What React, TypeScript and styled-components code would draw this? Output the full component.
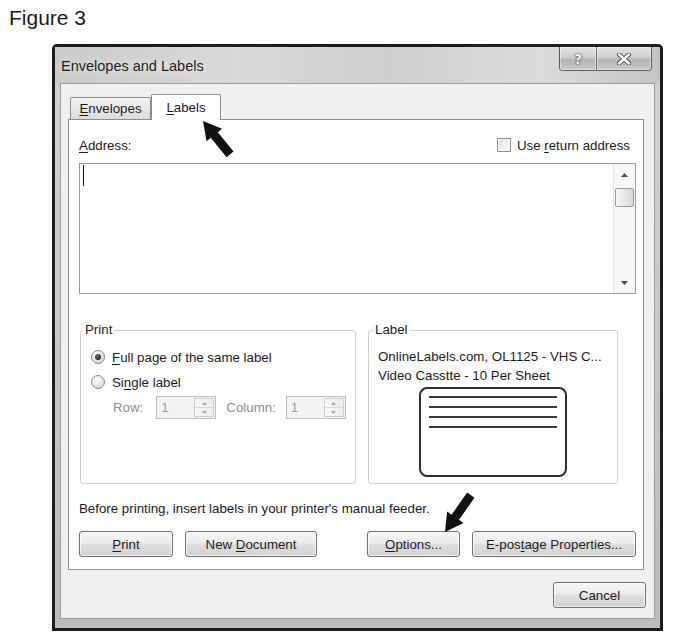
import React from "react";
import styled, { createGlobalStyle } from "styled-components";

const Global = createGlobalStyle`
  html, body {
    margin: 0;
    padding: 0;
    background: #fff;
  }
  body {
    font-family: "Liberation Sans", Arial, sans-serif;
    color: #1b1b1b;
  }
`;

const Page = styled.div`
  position: relative;
  width: 679px;
  height: 638px;
  overflow: hidden;
  background: #fff;
`;

const Caption = styled.div`
  padding: 6px 0 0 9px;
  height: 24px;
  font-size: 21px;
  line-height: 24px;
  color: #1a1a1a;
`;

const Window = styled.div`
  box-sizing: border-box;
  width: 611px;
  height: 587px;
  margin: 14px 0 0 52px;
  border: 3px solid #1d1d1d;
  border-radius: 5px 5px 0 0;
  padding: 0 5px 9px 5px;
  display: flex;
  flex-direction: column;
  background: linear-gradient(180deg, #c6c6c6 0%, #d2d2d2 8%, #c8c8c8 50%, #bcbcbc 100%);
`;

const TitleBar = styled.div`
  height: 36px;
  display: flex;
  justify-content: space-between;
  align-items: flex-start;
  margin: 0 -5px;
  padding: 0 8px 0 6px;
  background: linear-gradient(90deg, #cbcbcb 0%, #d9d9d9 30%, #cfcfcf 55%, #dcdcdc 80%, #c4c4c4 100%);
`;

const Title = styled.div`
  padding-top: 11px;
  font-size: 14.5px;
  line-height: 17px;
  color: #1c1c1c;
  text-shadow: 0 0 6px rgba(255, 255, 255, 0.9);
`;

const CaptionButtons = styled.div`
  display: flex;
  height: 23px;
  border: 1px solid #5c5c5c;
  border-top: none;
  border-radius: 0 0 4px 4px;
  overflow: hidden;
`;

const CapButton = styled.div<{ $w: number }>`
  box-sizing: border-box;
  width: ${(p) => p.$w}px;
  display: flex;
  align-items: center;
  justify-content: center;
  background: linear-gradient(180deg, #e2e2e2 0%, #cfcfcf 45%, #b4b4b4 55%, #c9c9c9 100%);
  box-shadow: inset 0 0 0 1px rgba(255, 255, 255, 0.45);
  & + & {
    border-left: 1px solid #6a6a6a;
  }
`;

const HelpGlyph = styled.span`
  font-family: "DejaVu Sans", sans-serif;
  font-weight: bold;
  font-size: 14px;
  color: #f4f4f4;
  text-shadow: 0 0 1px #444, 0 0 1px #444, 0 0 2px #555;
`;

const Client = styled.div`
  flex: 1;
  box-sizing: border-box;
  background: #f0f0f0;
  border: 1px solid #9c9c9c;
  padding: 10px 8px 10px 7px;
  display: flex;
  flex-direction: column;
`;

const TabStrip = styled.div`
  display: flex;
  align-items: flex-end;
  height: 26px;
  margin-bottom: -1px;
  padding-left: 2px;
`;

const Tab = styled.div<{ $active?: boolean; $w: number }>`
  box-sizing: border-box;
  position: relative;
  z-index: ${(p) => (p.$active ? 2 : 1)};
  width: ${(p) => p.$w}px;
  height: ${(p) => (p.$active ? 26 : 22)}px;
  margin-bottom: ${(p) => (p.$active ? 0 : 1)}px;
  border: 1px solid #8c8c8c;
  border-bottom: none;
  border-radius: 2px 2px 0 0;
  background: ${(p) =>
    p.$active ? "#ffffff" : "linear-gradient(180deg, #f4f4f4 0%, #e7e7e7 50%, #dcdcdc 100%)"};
  display: flex;
  align-items: flex-end;
  justify-content: center;
  padding-bottom: ${(p) => (p.$active ? 5 : 3)}px;
  font-size: 13.3px;
  line-height: 15px;
`;

const Panel = styled.div`
  box-sizing: border-box;
  height: 451px;
  margin-right: 2px;
  border: 1px solid #8d8d8d;
  background: #fff;
  padding: 17px 7px 12px 10px;
  display: flex;
  flex-direction: column;
`;

const AddressRow = styled.div`
  height: 16px;
  display: flex;
  align-items: center;
  justify-content: space-between;
  padding-right: 6px;
  font-size: 13.3px;
`;

const CheckWrap = styled.div`
  display: flex;
  align-items: center;
  gap: 6px;
`;

const CheckBox = styled.span`
  box-sizing: border-box;
  width: 14px;
  height: 14px;
  border: 1px solid #8f8f8f;
  background: linear-gradient(135deg, #dcdcdc 0%, #f2f2f2 60%, #fdfdfd 100%);
  box-shadow: inset 0 0 0 1px #f7f7f7;
`;

const U = styled.span`
  text-decoration: underline;
  text-underline-offset: 2px;
  text-decoration-thickness: 1px;
`;

const AddressBox = styled.div`
  box-sizing: border-box;
  height: 131px;
  margin-top: 10px;
  border: 1px solid #9a9a9a;
  display: flex;
`;

const TextArea = styled.div`
  flex: 1;
  padding: 1px 3px;
`;

const Caret = styled.div`
  width: 1px;
  height: 21px;
  background: #111;
`;

const ScrollBar = styled.div`
  width: 21px;
  display: flex;
  flex-direction: column;
  align-items: center;
  background: #f7f7f7;
  border-left: 1px solid #e4e4e4;
`;

const ScrollArrow = styled.div`
  height: 21px;
  width: 100%;
  display: flex;
  align-items: center;
  justify-content: center;
`;

const Thumb = styled.div`
  box-sizing: border-box;
  width: 19px;
  height: 19px;
  margin-top: 3px;
  border: 1px solid #9b9b9b;
  border-radius: 2px;
  background: linear-gradient(90deg, #f6f6f6 0%, #e9e9e9 50%, #d6d6d6 100%);
`;

const Spacer = styled.div`
  flex: 1;
`;

const Groups = styled.div`
  display: flex;
  gap: 12px;
  margin: 28px 0 0 1px;
`;

const Group = styled.fieldset<{ $w: number }>`
  box-sizing: border-box;
  width: ${(p) => p.$w}px;
  height: 162px;
  margin: 0;
  padding: 0;
  border: 1px solid #d2d2d2;
  border-radius: 3px;
  min-inline-size: 0;
`;

const Legend = styled.legend<{ $x: number }>`
  margin-left: ${(p) => p.$x}px;
  padding: 0 2px;
  font-size: 13.3px;
  line-height: 16px;
`;

const PrintBody = styled.div`
  padding: 10px 0 0 10px;
  display: flex;
  flex-direction: column;
  font-size: 13.3px;
`;

const RadioRow = styled.div`
  height: 18px;
  display: flex;
  align-items: center;
  gap: 7px;
  & + & {
    margin-top: 7px;
  }
`;

const Radio = styled.span<{ $checked?: boolean }>`
  box-sizing: border-box;
  width: 14px;
  height: 14px;
  border-radius: 50%;
  border: 1px solid #8a8a8a;
  background: radial-gradient(circle at 40% 35%, #fdfdfd 0%, #e4e4e4 55%, #c4c4c4 100%);
  display: flex;
  align-items: center;
  justify-content: center;
  &::after {
    content: "";
    display: ${(p) => (p.$checked ? "block" : "none")};
    width: 6px;
    height: 6px;
    border-radius: 50%;
    background: radial-gradient(circle at 40% 35%, #666 0%, #1e1e1e 80%);
  }
`;

const SpinRow = styled.div`
  height: 23px;
  margin-top: 5px;
  padding-left: 22px;
  display: flex;
  align-items: center;
  color: #8e8e8e;
`;

const DimLabel = styled.span<{ $gap: number }>`
  margin-left: ${(p) => p.$gap}px;
`;

const Spin = styled.div<{ $gap: number }>`
  box-sizing: border-box;
  width: 60px;
  height: 23px;
  margin-left: ${(p) => p.$gap}px;
  border: 1px solid #bdbdbd;
  background: #f3f3f3;
  display: flex;
  align-items: stretch;
`;

const SpinValue = styled.span`
  flex: 1;
  padding-left: 4px;
  line-height: 21px;
  color: #9a9a9a;
`;

const SpinButtons = styled.div`
  box-sizing: border-box;
  width: 20px;
  margin: 1px;
  border: 1px solid #cfcfcf;
  display: flex;
  flex-direction: column;
  background: linear-gradient(90deg, #f7f7f7, #ececec);
`;

const SpinHalf = styled.div`
  flex: 1;
  display: flex;
  align-items: center;
  justify-content: center;
  & + & {
    border-top: 1px solid #d8d8d8;
  }
`;

const LabelBody = styled.div`
  padding: 9px 9px 0 9px;
  display: flex;
  flex-direction: column;
  font-size: 13.3px;
  line-height: 19px;
  white-space: nowrap;
`;

const Preview = styled.div`
  box-sizing: border-box;
  width: 148px;
  height: 90px;
  margin: 2px auto 0;
  border: 2px solid #2e2e2e;
  border-radius: 8px;
  padding: 7px 8px 0;
  display: flex;
  flex-direction: column;
  gap: 8px;
`;

const PreviewLine = styled.div`
  height: 2px;
  background: #3a3a3a;
`;

const Note = styled.div`
  margin-top: 16px;
  font-size: 13.3px;
  line-height: 18px;
`;

const ButtonRow = styled.div`
  margin-top: 13px;
  display: flex;
  justify-content: space-between;
`;

const ButtonGroup = styled.div`
  display: flex;
  gap: 12px;
`;

const Button = styled.button<{ $w: number }>`
  box-sizing: border-box;
  width: ${(p) => p.$w}px;
  height: 26px;
  padding: 0;
  border: 1px solid #707070;
  border-radius: 3px;
  background: linear-gradient(180deg, #f5f5f5 0%, #ececec 45%, #dfdfdf 52%, #d1d1d1 100%);
  box-shadow: inset 0 0 0 1px rgba(255, 255, 255, 0.75);
  font-family: inherit;
  font-size: 13.3px;
  color: #1b1b1b;
  display: flex;
  align-items: center;
  justify-content: center;
`;

const Footer = styled.div`
  margin-top: 12px;
  display: flex;
  justify-content: flex-end;
`;

const Overlay = styled.svg`
  position: absolute;
  left: 0;
  top: 0;
  pointer-events: none;
`;

const Tri = ({ down }: { down?: boolean }) => (
  <svg width="7" height="4" viewBox="0 0 7 4">
    <polygon points={down ? "0,0 7,0 3.5,4" : "3.5,0 7,4 0,4"} fill="#4a4a4a" />
  </svg>
);

const SmallTri = ({ down }: { down?: boolean }) => (
  <svg width="5" height="3" viewBox="0 0 5 3">
    <polygon points={down ? "0,0 5,0 2.5,3" : "2.5,0 5,3 0,3"} fill="#a8a8a8" />
  </svg>
);

const arrowPoints = (len: number) =>
  `0,0 10,18 4.5,18 4.5,${len} -4.5,${len} -4.5,18 -10,18`;

function SpinBox({ gap }: { gap: number }) {
  return (
    <Spin $gap={gap}>
      <SpinValue>1</SpinValue>
      <SpinButtons>
        <SpinHalf>
          <SmallTri />
        </SpinHalf>
        <SpinHalf>
          <SmallTri down />
        </SpinHalf>
      </SpinButtons>
    </Spin>
  );
}

export default function App() {
  return (
    <Page>
      <Global />
      <Caption>Figure 3</Caption>
      <Window>
        <TitleBar>
          <Title>Envelopes and Labels</Title>
          <CaptionButtons>
            <CapButton $w={36}>
              <HelpGlyph>?</HelpGlyph>
            </CapButton>
            <CapButton $w={55}>
              <svg width="14" height="12" viewBox="0 0 14 12">
                <path d="M2 1.5 L12 10.5 M12 1.5 L2 10.5" stroke="#555" strokeWidth="4.5" strokeLinecap="round" />
                <path d="M2 1.5 L12 10.5 M12 1.5 L2 10.5" stroke="#f5f5f5" strokeWidth="2.5" strokeLinecap="round" />
              </svg>
            </CapButton>
          </CaptionButtons>
        </TitleBar>
        <Client>
          <TabStrip>
            <Tab $w={81}>
              <span>
                <U>E</U>nvelopes
              </span>
            </Tab>
            <Tab $w={70} $active>
              <span>
                <U>L</U>abels
              </span>
            </Tab>
          </TabStrip>
          <Panel>
            <AddressRow>
              <span>
                <U>A</U>ddress:
              </span>
              <CheckWrap>
                <CheckBox />
                <span>
                  Use <U>r</U>eturn address
                </span>
              </CheckWrap>
            </AddressRow>
            <AddressBox>
              <TextArea>
                <Caret />
              </TextArea>
              <ScrollBar>
                <ScrollArrow>
                  <Tri />
                </ScrollArrow>
                <Thumb />
                <Spacer />
                <ScrollArrow>
                  <Tri down />
                </ScrollArrow>
              </ScrollBar>
            </AddressBox>
            <Groups>
              <Group $w={276}>
                <Legend $x={2}>Print</Legend>
                <PrintBody>
                  <RadioRow>
                    <Radio $checked />
                    <span>
                      <U>F</U>ull page of the same label
                    </span>
                  </RadioRow>
                  <RadioRow>
                    <Radio />
                    <span>
                      Si<U>n</U>gle label
                    </span>
                  </RadioRow>
                  <SpinRow>
                    <DimLabel $gap={0}>Row:</DimLabel>
                    <SpinBox gap={13} />
                    <DimLabel $gap={10}>Column:</DimLabel>
                    <SpinBox gap={10} />
                  </SpinRow>
                </PrintBody>
              </Group>
              <Group $w={250}>
                <Legend $x={4}>Label</Legend>
                <LabelBody>
                  <span>OnlineLabels.com, OL1125 - VHS C...</span>
                  <span>Video Casstte - 10 Per Sheet</span>
                  <Preview>
                    <PreviewLine />
                    <PreviewLine />
                    <PreviewLine />
                    <PreviewLine />
                  </Preview>
                </LabelBody>
              </Group>
            </Groups>
            <Note>Before printing, insert labels in your printer's manual feeder.</Note>
            <ButtonRow>
              <ButtonGroup>
                <Button $w={94}>
                  <span>
                    <U>P</U>rint
                  </span>
                </Button>
                <Button $w={132}>
                  <span>
                    New <U>D</U>ocument
                  </span>
                </Button>
              </ButtonGroup>
              <ButtonGroup>
                <Button $w={93}>
                  <span>
                    <U>O</U>ptions...
                  </span>
                </Button>
                <Button $w={164}>
                  <span>
                    E-pos<U>t</U>age Properties...
                  </span>
                </Button>
              </ButtonGroup>
            </ButtonRow>
          </Panel>
          <Footer>
            <Button $w={93}>Cancel</Button>
          </Footer>
        </Client>
      </Window>
      <Overlay width="679" height="638" viewBox="0 0 679 638">
        <polygon points={arrowPoints(43)} transform="translate(203 121) rotate(-39)" fill="#111" />
        <polygon points={arrowPoints(45)} transform="translate(445 532) rotate(-145)" fill="#111" />
      </Overlay>
    </Page>
  );
}
